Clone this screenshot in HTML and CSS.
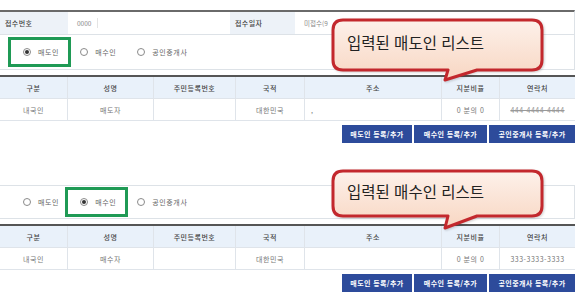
FILE: index.html
```html
<!DOCTYPE html>
<html lang="ko">
<head>
<meta charset="utf-8">
<link rel="stylesheet" href="styles.css">
</head>
<body>
<div class="page">
  <section class="block first">
    <div class="info">
      <div class="lbl">접수번호</div>
      <div class="val"><span class="muted">0000</span><span class="caret"></span></div>
      <div class="lbl">접수일자</div>
      <div class="val"><span class="muted">미접수(9</span></div>
    </div>
    <div class="radios">
      <label class="opt sel"><span class="dot on"></span>매도인</label>
      <label class="opt"><span class="dot"></span>매수인</label>
      <label class="opt"><span class="dot"></span>공인중개사</label>
    </div>
    <div class="grid">
      <div class="th">구분</div><div class="th">성명</div><div class="th">주민등록번호</div><div class="th">국적</div><div class="th">주소</div><div class="th">지분비율</div><div class="th">연락처</div>
      <div class="td">내국인</div><div class="td">매도자</div><div class="td"></div><div class="td">대한민국</div><div class="td left">,</div><div class="td">0 분의 0</div><div class="td phone">444-4444-4444</div>
    </div>
    <div class="btns">
      <button class="btn w1">매도인 등록/추가</button>
      <button class="btn w2">매수인 등록/추가</button>
      <button class="btn w3">공인중개사 등록/추가</button>
    </div>
  </section>

  <section class="block second">
    <div class="radios topline">
      <label class="opt"><span class="dot"></span>매도인</label>
      <label class="opt sel"><span class="dot on"></span>매수인</label>
      <label class="opt"><span class="dot"></span>공인중개사</label>
    </div>
    <div class="grid">
      <div class="th">구분</div><div class="th">성명</div><div class="th">주민등록번호</div><div class="th">국적</div><div class="th">주소</div><div class="th">지분비율</div><div class="th">연락처</div>
      <div class="td">내국인</div><div class="td">매수자</div><div class="td"></div><div class="td">대한민국</div><div class="td left"></div><div class="td">0 분의 0</div><div class="td">333-3333-3333</div>
    </div>
    <div class="btns">
      <button class="btn w1">매도인 등록/추가</button>
      <button class="btn w2">매수인 등록/추가</button>
      <button class="btn w3">공인중개사 등록/추가</button>
    </div>
  </section>

  <div class="callout c1">
    <svg width="216" height="66" viewBox="0 0 216 66">
      <defs>
        <linearGradient id="g1" x1="0" y1="0" x2="0" y2="1">
          <stop offset="0" stop-color="#fdf1ea"/>
          <stop offset="1" stop-color="#f8d6c2"/>
        </linearGradient>
      </defs>
      <path d="M13,3 H202 Q212,3 212,13 V43 Q212,53 202,53 H147 L115,63 L118,53 H13 Q3,53 3,43 V13 Q3,3 13,3 Z" fill="url(#g1)" stroke="#c3282d" stroke-width="3" stroke-linejoin="round"/>
    </svg>
    <span class="ctext">입력된 매도인 리스트</span>
  </div>

  <div class="callout c2">
    <svg width="216" height="66" viewBox="0 0 216 66">
      <defs>
        <linearGradient id="g2" x1="0" y1="0" x2="0" y2="1">
          <stop offset="0" stop-color="#fdf1ea"/>
          <stop offset="1" stop-color="#f8d6c2"/>
        </linearGradient>
      </defs>
      <path d="M13,6 H202 Q212,6 212,16 V41 Q212,51 202,51 H147 L115,63 L118,51 H13 Q3,51 3,41 V16 Q3,6 13,6 Z" fill="url(#g2)" stroke="#c3282d" stroke-width="3" stroke-linejoin="round"/>
    </svg>
    <span class="ctext">입력된 매수인 리스트</span>
  </div>
</div>
</body>
</html>
```

FILE: styles.css
```css
html, body {
  margin: 0;
  padding: 0;
  background: #fff;
}
.page {
  position: relative;
  width: 580px;
  height: 300px;
  font-family: "Noto Sans CJK KR", "Noto Sans", sans-serif;
  font-size: 7px;
  color: #555;
}
.block {
  width: 575px;
  display: flex;
  flex-direction: column;
}
.first {
  padding-top: 10px;
}
.second {
  margin-top: 42px;
}
.info {
  display: grid;
  grid-template-columns: 68px 162px 65px 280px;
  height: 25px;
  border-top: 2px solid #6a6a6a;
  border-bottom: 1px solid #dde2e7;
  border-right: 1px solid #dde2e7;
  box-sizing: border-box;
}
.lbl {
  background: #edf2f8;
  display: flex;
  align-items: center;
  padding-left: 5px;
  color: #444;
  letter-spacing: 0.4px;
  font-weight: 500;
}
.val {
  display: flex;
  align-items: center;
  padding-left: 9px;
  gap: 6px;
}
.muted {
  color: #8a8a8a;
  font-size: 6.5px;
}
.caret {
  width: 1px;
  height: 10px;
  background: #e4e4e4;
}
.radios {
  display: flex;
  align-items: center;
  height: 35px;
  padding-left: 8px;
  border-bottom: 1px solid #dde2e7;
  border-right: 1px solid #dde2e7;
  box-sizing: border-box;
  margin-bottom: 5px;
}
.radios.topline {
  border-top: 1px solid #dde2e7;
  height: 34px;
}
.opt {
  display: flex;
  align-items: center;
  gap: 7px;
  height: 30px;
  padding: 0 9px 0 12px;
  box-sizing: border-box;
  border: 3px solid transparent;
  color: #666;
  letter-spacing: 0.6px;
  margin-right: -6px;
}
.opt.sel {
  border-color: #1f9a55;
}
.dot {
  width: 8px;
  height: 8px;
  border-radius: 50%;
  border: 1px solid #8a8a8a;
  box-sizing: border-box;
  display: flex;
  align-items: center;
  justify-content: center;
  background: #fff;
}
.dot.on::after {
  content: "";
  width: 4px;
  height: 4px;
  border-radius: 50%;
  background: #333;
}
.grid {
  display: grid;
  grid-template-columns: 68px 86px 82px 69px 137px 58px 75px;
  border-top: 2px solid #555;
}
.th, .td {
  height: 22px;
  display: flex;
  align-items: center;
  justify-content: center;
  border-right: 1px solid #dfe4ea;
  border-bottom: 1px solid #dfe4ea;
  box-sizing: border-box;
  letter-spacing: 0.5px;
}
.th {
  background: #e9f1fa;
  color: #444;
  font-weight: 500;
}
.td {
  color: #777;
}
.th:nth-child(7n), .td:nth-child(7n) {
  border-right: none;
}
.td.left {
  justify-content: flex-start;
  padding-left: 6px;
}
.phone {
  text-decoration: line-through;
  color: #999;
}
.btns {
  display: flex;
  justify-content: flex-end;
  gap: 2px;
  margin-top: 4px;
}
.btn {
  height: 18px;
  border: none;
  background: #2d4b9b;
  color: #fff;
  font-family: "Noto Sans CJK KR", "Noto Sans", sans-serif;
  font-size: 7px;
  font-weight: 700;
  letter-spacing: 0.4px;
  padding: 0;
}
.w1 { width: 70px; }
.w2 { width: 73px; }
.w3 { width: 86px; }
.callout {
  position: absolute;
  width: 216px;
  height: 66px;
}
.callout svg {
  position: absolute;
  left: 0;
  top: 0;
  filter: drop-shadow(1px 1px 1px rgba(0, 0, 0, 0.18));
}
.c1 { left: 330px; top: 17px; }
.c2 { left: 330px; top: 165px; }
.ctext {
  position: absolute;
  left: 17px;
  font-size: 15.5px;
  color: #222;
  line-height: 20px;
  white-space: nowrap;
}
.c1 .ctext { top: 15px; }
.c2 .ctext { top: 16px; }
```
